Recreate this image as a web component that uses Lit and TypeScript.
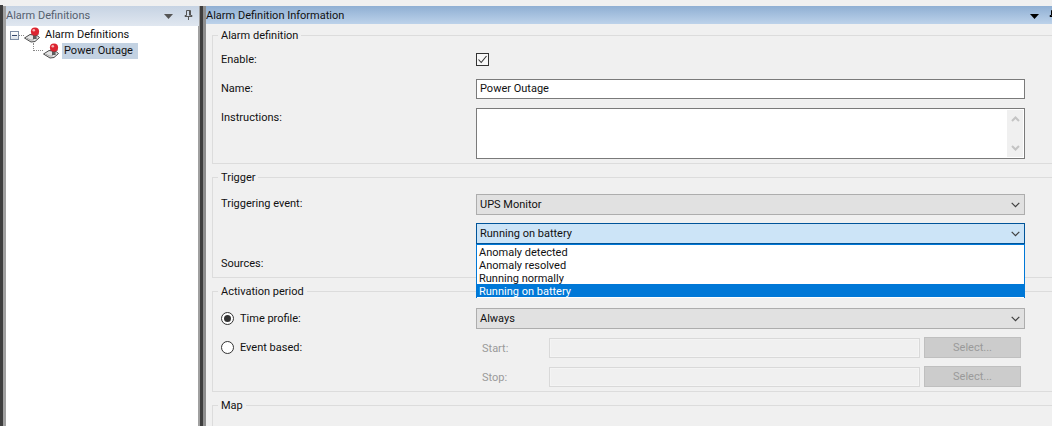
import { LitElement, html, css, svg } from "lit";
import { customElement } from "lit/decorators.js";

const alarmIcon = svg`<svg class="alarm" width="18" height="16" viewBox="0 0 18 16">
  <path d="M.5 11 L6 7.5 L13 8.5 L15.5 10.5 L11 14.5 L7 15 Z" fill="#e4e4e4" stroke="#4a4a4a" stroke-width="1"/>
  <path d="M3 11.2 L7 13.2 L10 12.6" fill="none" stroke="#9a9a9a" stroke-width=".8"/>
  <rect x="9" y="7" width="3.6" height="5" fill="#5e5e5e"/>
  <circle cx="11" cy="4.6" r="4.1" fill="#dc2430"/>
  <circle cx="9.8" cy="3.2" r="1.3" fill="#f6b0b0"/>
  <path d="M7 5.5 A4.2 4.2 0 0 0 15 5.5 L14.5 7.6 A4 2 0 0 1 7.5 7.6 Z" fill="#8a1b20"/>
</svg>`;

const chevron = svg`<svg class="chev" width="9" height="6" viewBox="0 0 9 6"><path d="M.7 .8 L4.5 4.6 L8.3 .8" fill="none" stroke="#404040" stroke-width="1.2"/></svg>`;

@customElement("app-root")
export class AppRoot extends LitElement {
  static styles = css`
    :host { display: block; width: 1052px; height: 426px; overflow: hidden; background: #f0f0f0;
      font-family: "Roboto", "Liberation Sans", sans-serif; font-size: 11px; color: #111; }
    * { box-sizing: border-box; }
    .app { display: flex; height: 426px; padding-top: 6px; }
    .edge { width: 3px; margin-top: -1px; background: #3e3e3e; flex: none; }
    .gap { width: 3px; background: #a0a0a0; flex: none; }
    .left { width: 193px; flex: none; display: flex; flex-direction: column; background: #fff; }
    .split { width: 7px; flex: none; background: linear-gradient(90deg, #a0a0a0 0 1px, #3e3e3e 1px 4px, #8e8e8e 4px 7px); }
    .right { flex: 1; min-width: 0; display: flex; flex-direction: column; }
    .head { height: 18px; flex: none; display: flex; align-items: center; font-size: 11px; }
    .left .head { height: 20px; background: linear-gradient(#c6d3e3, #e0e7f0); color: #55606e; padding-bottom: 2px; }
    .right .head { background: linear-gradient(#8fafd3, #bcd2ea); color: #111; }
    .head .title { flex: 1; line-height: 20px; height: 18px; }
    .head svg { display: block; flex: none; }
    .caret { margin-right: 11px; margin-top: 3px; }
    .pin { margin-right: 6px; }
    .right .pin { margin-right: -6px; }
    .right .caret { margin-right: 10px; }
    .tree { flex: 1; padding: 1px 0 0 4px; border-right: 1px solid #a0a0a0; }
    .node { display: flex; align-items: center; height: 16px; }
    .box { width: 9px; height: 9px; border: 1px solid #7f8ea5; background: linear-gradient(#fff, #dde3ea); position: relative; flex: none; }
    .box::after { content: ""; position: absolute; left: 1px; right: 1px; top: 3px; height: 1px; background: #34466b; }
    .dots-h { width: 5px; border-top: 1px dotted #888; flex: none; }
    .alarm { display: block; flex: none; }
    .label { padding: 0 2px; line-height: 16px; height: 16px; white-space: nowrap; }
    .root-label { padding-left: 3px; }
    .child { padding-left: 23px; }
    .elbow { width: 10px; height: 8px; align-self: flex-start; border-left: 1px dotted #888; border-bottom: 1px dotted #888; flex: none; }
    .sel { background: #c3d2e2; margin-left: 1px; width: 76px; }
    .form { flex: 1; padding: 0 0 0 6px; min-height: 0; position: relative; }
    fieldset { margin: 0; padding: 0; border: 1px solid #dcdcdc; border-right: none; min-width: 0; display: block; }
    legend { margin-left: -3px; padding: 0 3px; line-height: 16px; height: 14px; }
    .g1 { margin-top: 4px; height: 136px; padding: 10px 0 0 8px; }
    .g2 { margin-top: 6px; height: 108px; padding: 10px 0 0 8px; }
    .g3 { margin-top: 6px; height: 108px; padding: 10px 0 0 8px; }
    .g4 { margin-top: 6px; height: 40px; padding-left: 8px; }
    .row { display: grid; grid-template-columns: 255px 549px; align-items: start; }
    .lab { line-height: 16px; }
    .low { margin-top: 1px; }
    .trig { margin-top: 2px; }
    .h-enable { height: 28px; }
    .cb { width: 13px; height: 13px; display: block; margin-top: 1px; }
    .input { height: 20px; background: #fff; border: 1px solid #7a7a7a; padding: 0 3px; line-height: 18px; margin-top: -1px; }
    .h-name { height: 29px; }
    .area { height: 51px; background: #fff; border: 1px solid #7a7a7a; padding: 1px; display: flex; justify-content: flex-end; margin-top: -1px; }
    .scroll { width: 16px; background: #f0f0f0; display: flex; flex-direction: column; justify-content: space-between; align-items: center; padding: 6px 0 6px; }
    .scroll svg { display: block; }
    .combo { height: 21px; border: 1px solid #adadad; background: #e1e1e1; display: flex; align-items: center; justify-content: space-between; padding: 0 4px 0 3px; line-height: 19px; }
    .h-ev { height: 29px; }
    .focus { background: #cce4f7; border-color: #005499; }
    .h-src { height: 42px; }
    .lab-src { margin-top: 33px; }
    .h-tp { height: 29px; }
    .radio { display: flex; align-items: center; gap: 6px; height: 20px; }
    .radio svg { display: block; flex: none; }
    .sub { display: flex; align-items: flex-end; height: 21px; }
    .sub .cap { color: #9a9a9a; width: 73px; padding-left: 6px; flex: none; line-height: 22px; height: 20px; }
    .dis { width: 371px; height: 20px; border: 1px solid #d9d9d9; background: #f0f0f0; box-shadow: inset 0 0 0 1px #f4f4f4; flex: none; }
    .btn { width: 97px; height: 21px; margin-left: 4px; background: #cccccc; border: 1px solid #bfbfbf; color: #9a9a9a; text-align: center; line-height: 19px; flex: none; }
    .h-s { height: 29px; }
    .list { position: absolute; left: 270px; top: 220px; width: 549px; height: 54px; background: #fff; border: 1px solid #0078d7; border-bottom: none; }
    .opt { height: 13px; line-height: 15px; padding-left: 2px; white-space: nowrap; }
    .opt.on { background: #0078d7; color: #fff; }
  `;

  private caret(color: string) {
    return svg`<svg class="caret" width="9" height="5" viewBox="0 0 9 5"><path d="M0 0 H9 L4.5 5 Z" fill="${color}"/></svg>`;
  }
  private pin(color: string) {
    return svg`<svg class="pin" width="9" height="10" viewBox="0 0 9 10"><path d="M2.5 .5 H6.5 V5.5 H8 V6.5 H1 V5.5 H2.5 Z M4.5 6.5 V10 M5.5 1 V5.5" fill="none" stroke="${color}" stroke-width="1"/></svg>`;
  }

  render() {
    const up = svg`<svg width="9" height="6" viewBox="0 0 9 6"><path d="M1 5 L4.5 1.5 L8 5" fill="none" stroke="#c4c4c4" stroke-width="2"/></svg>`;
    const down = svg`<svg width="9" height="6" viewBox="0 0 9 6"><path d="M1 1 L4.5 4.5 L8 1" fill="none" stroke="#c4c4c4" stroke-width="2"/></svg>`;
    return html`<div class="app">
      <div class="edge"></div><div class="gap"></div>
      <div class="left">
        <div class="head"><span class="title">Alarm Definitions</span>${this.caret("#555")}${this.pin("#555")}</div>
        <div class="tree">
          <div class="node"><span class="box"></span><span class="dots-h"></span>${alarmIcon}<span class="label root-label">Alarm Definitions</span></div>
          <div class="node child"><span class="elbow"></span>${alarmIcon}<span class="label sel">Power Outage</span></div>
        </div>
      </div>
      <div class="split"></div>
      <div class="right">
        <div class="head"><span class="title">Alarm Definition Information</span>${this.caret("#000")}${this.pin("#000")}</div>
        <div class="form">
          <fieldset class="g1"><legend>Alarm definition</legend>
            <div class="row h-enable"><span class="lab">Enable:</span>
              <svg class="cb" viewBox="0 0 13 13"><rect x=".5" y=".5" width="12" height="12" fill="#f8f8f8" stroke="#333"/><path d="M2.5 6.5 L5.2 9.5 L10.5 3" fill="none" stroke="#333" stroke-width="1.1"/></svg></div>
            <div class="row h-name"><span class="lab low">Name:</span><div class="input">Power Outage</div></div>
            <div class="row"><span class="lab low">Instructions:</span><div class="area"><div class="scroll">${up}${down}</div></div></div>
          </fieldset>
          <fieldset class="g2"><legend>Trigger</legend>
            <div class="row h-ev"><span class="lab trig">Triggering event:</span><div class="combo"><span>UPS Monitor</span>${chevron}</div></div>
            <div class="row h-src"><span class="lab lab-src">Sources:</span><div class="combo focus"><span>Running on battery</span>${chevron}</div></div>
          </fieldset>
          <fieldset class="g3"><legend>Activation period</legend>
            <div class="row h-tp"><div class="radio">
              <svg width="13" height="13" viewBox="0 0 13 13"><circle cx="6.5" cy="6.5" r="6" fill="#fff" stroke="#333"/><circle cx="6.5" cy="6.5" r="3.5" fill="#333"/></svg><span>Time profile:</span></div>
              <div class="combo"><span>Always</span>${chevron}</div></div>
            <div class="row h-s"><div class="radio">
              <svg width="13" height="13" viewBox="0 0 13 13"><circle cx="6.5" cy="6.5" r="6" fill="#fff" stroke="#333"/></svg><span>Event based:</span></div>
              <div class="sub"><span class="cap">Start:</span><div class="dis"></div><div class="btn">Select...</div></div></div>
            <div class="row"><span></span>
              <div class="sub"><span class="cap">Stop:</span><div class="dis"></div><div class="btn">Select...</div></div></div>
          </fieldset>
          <fieldset class="g4"><legend>Map</legend></fieldset>
          <div class="list">
            <div class="opt">Anomaly detected</div>
            <div class="opt">Anomaly resolved</div>
            <div class="opt">Running normally</div>
            <div class="opt on">Running on battery</div>
          </div>
        </div>
      </div>
    </div>`;
  }
}
